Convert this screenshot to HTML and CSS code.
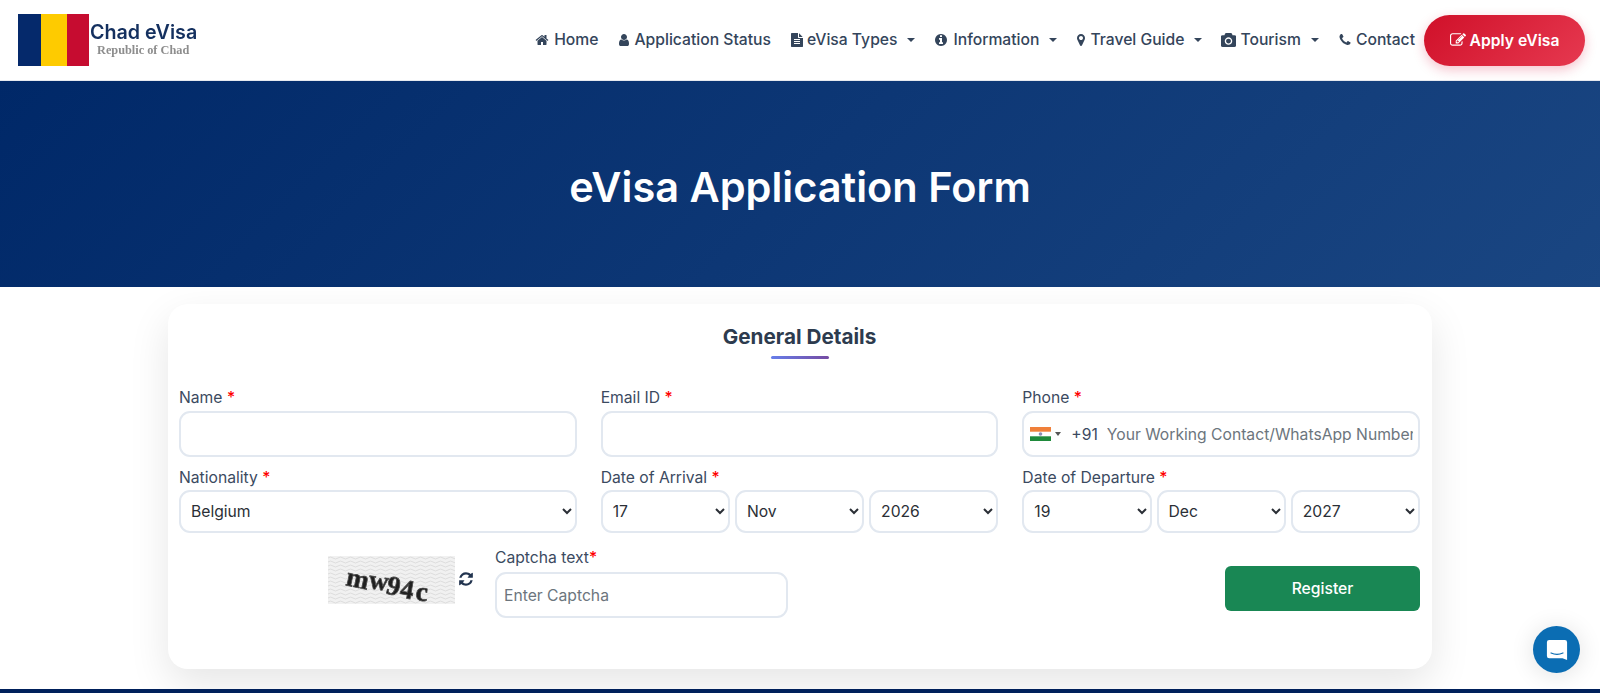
FILE: index.html
```html
<!DOCTYPE html>
<html lang="en">
<head>
<meta charset="utf-8">
<title>eVisa Application Form</title>
<link rel="stylesheet" href="styles.css">
</head>
<body>
<svg class="sprite" aria-hidden="true">
  <symbol id="i-home" viewBox="0 0 1792 1792"><path d="M1472 992v480q0 26-19 45t-45 19h-384v-384h-256v384h-384q-26 0-45-19t-19-45v-480q0-1 .5-3t.5-3l575-474 575 474q1 2 1 6zm223-69l-62 74q-8 9-21 11h-3q-13 0-21-7l-692-577-692 577q-12 8-24 7-13-2-21-11l-62-74q-8-10-7-23.500t11-21.500l719-599q32-26 76-26t76 26l244 204v-195q0-14 9-23t23-9h192q14 0 23 9t9 23v408l219 182q10 8 11 21.500t-7 23.500z"/></symbol>
  <symbol id="i-user" viewBox="0 0 1792 1792"><path d="M1536 1399q0 109-62.500 187t-150.500 78h-854q-88 0-150.500-78t-62.500-187q0-85 8.500-160.500t31.500-152 58.500-131 94-89 134.500-34.500q131 128 313 128t313-128q76 0 134.500 34.500t94 89 58.500 131 31.500 152 8.500 160.500zm-256-887q0 159-112.500 271.500t-271.500 112.500-271.500-112.500-112.500-271.500 112.500-271.500 271.500-112.500 271.500 112.500 112.500 271.500z"/></symbol>
  <symbol id="i-file" viewBox="0 0 1792 1792"><path d="M1596 476q14 14 28 36h-472v-472q22 14 36 28zm-476 164h544v1056q0 40-28 68t-68 28h-1344q-40 0-68-28t-28-68v-1600q0-40 28-68t68-28h800v544q0 40 28 68t68 28zm160 736v-64q0-14-9-23t-23-9h-704q-14 0-23 9t-9 23v64q0 14 9 23t23 9h704q14 0 23-9t9-23zm0-256v-64q0-14-9-23t-23-9h-704q-14 0-23 9t-9 23v64q0 14 9 23t23 9h704q14 0 23-9t9-23zm0-256v-64q0-14-9-23t-23-9h-704q-14 0-23 9t-9 23v64q0 14 9 23t23 9h704q14 0 23-9t9-23z"/></symbol>
  <symbol id="i-info" viewBox="0 0 1792 1792"><path d="M1152 1376v-160q0-14-9-23t-23-9h-96v-512q0-14-9-23t-23-9h-320q-14 0-23 9t-9 23v160q0 14 9 23t23 9h96v320h-96q-14 0-23 9t-9 23v160q0 14 9 23t23 9h448q14 0 23-9t9-23zm-128-896v-160q0-14-9-23t-23-9h-192q-14 0-23 9t-9 23v160q0 14 9 23t23 9h192q14 0 23-9t9-23zm640 416q0 209-103 385.500t-279.500 279.500-385.500 103-385.500-103-279.500-279.500-103-385.500 103-385.500 279.500-279.500 385.500-103 385.500 103 279.500 279.500 103 385.500z"/></symbol>
  <symbol id="i-pin" viewBox="0 0 1792 1792"><path d="M1152 640q0-106-75-181t-181-75-181 75-75 181 75 181 181 75 181-75 75-181zm256 0q0 109-33 179l-364 774q-16 33-47.500 52t-67.500 19-67.500-19-46.500-52l-365-774q-33-70-33-179 0-212 150-362t362-150 362 150 150 362z"/></symbol>
  <symbol id="i-camera" viewBox="0 0 1792 1792"><path d="M896 672q119 0 203.500 84.500t84.500 203.500-84.500 203.500-203.500 84.500-203.500-84.500-84.500-203.500 84.500-203.500 203.500-84.500zm704-416q106 0 181 75t75 181v896q0 106-75 181t-181 75h-1408q-106 0-181-75t-75-181v-896q0-106 75-181t181-75h224l51-136q19-49 69.500-84.500t103.500-35.500h512q53 0 103.500 35.500t69.500 84.500l51 136h224zm-704 1152q185 0 316.500-131.500t131.500-316.500-131.500-316.500-316.500-131.500-316.500 131.500-131.500 316.500 131.500 316.500 316.500 131.500z"/></symbol>
  <symbol id="i-phone" viewBox="0 0 1792 1792"><path d="M1600 1240q0 27-10 70.500t-21 68.500q-21 50-122 106-94 51-186 51-27 0-53-3.500t-57.500-12.500-47-14.500-55.500-20.500-49-18q-98-35-175-83-127-79-264-216t-216-264q-48-77-83-175-3-9-18-49t-20.500-55.500-14.500-47-12.500-57.500-3.500-53q0-92 51-186 56-101 106-122 25-11 68.500-21t70.500-10q14 0 21 3 18 6 53 76 11 19 30 54t35 63.500 31 53.500q3 4 17.500 25t21.500 35.500 7 28.500q0 20-28.500 50t-62 55-62 53-28.500 46q0 9 5 22.500t8.500 20.500 14 24 11.500 19q76 137 174 235t235 174q2 1 19 11.500t24 14 20.500 8.500 22.500 5q18 0 46-28.500t53-62 55-62 50-28.500q14 0 28.500 7t35.500 21.500 25 17.500q25 15 53.500 31t63.500 35 54 30q70 35 76 53 3 7 3 21z"/></symbol>
  <symbol id="i-edit" viewBox="0 0 1792 1792"><path d="M888 1184l116-116-152-152-116 116v56h96v96h56zm440-720q-16-16-33 1l-350 350q-17 17-1 33t33-1l350-350q17-17 1-33zm80 594v190q0 119-84.500 203.500t-203.500 84.500h-832q-119 0-203.500-84.500t-84.500-203.500v-832q0-119 84.500-203.500t203.500-84.500h832q63 0 117 25 15 7 18 23 3 17-9 29l-49 49q-14 14-32 8-23-6-45-6h-832q-66 0-113 47t-47 113v832q0 66 47 113t113 47h832q66 0 113-47t47-113v-126q0-13 9-22l64-64q15-15 35-7t20 29zm-96-738l288 288-672 672h-288v-288zm444 132l-92 92-288-288 92-92q28-28 68-28t68 28l152 152q28 28 28 68t-28 68z"/></symbol>
  <symbol id="i-refresh" viewBox="0 0 1792 1792"><path d="M1639 1056q0 5-1 7-64 268-268 434.500t-478 166.500q-146 0-282.500-55t-243.500-157l-129 129q-19 19-45 19t-45-19-19-45v-448q0-26 19-45t45-19h448q26 0 45 19t19 45-19 45l-137 137q71 66 161 102t187 36q134 0 250-65t186-179q11-17 53-117 8-23 30-23h192q13 0 22.500 9.500t9.500 22.500zm25-800v448q0 26-19 45t-45 19h-448q-26 0-45-19t-19-45 19-45l138-138q-148-137-349-137-134 0-250 65t-186 179q-11 17-53 117-8 23-30 23h-199q-13 0-22.500-9.500t-9.500-22.500v-7q65-268 270-434.500t480-166.500q146 0 284 55.500t245 156.500l130-129q19-19 45-19t45 19 19 45z"/></symbol>
</svg>

<header class="site-header">
  <a class="brand" href="#">
    <span class="flag"><i class="flag-blue"></i><i class="flag-yellow"></i><i class="flag-red"></i></span>
    <span class="brand-text">
      <span class="brand-name">Chad eVisa</span>
      <span class="brand-sub">Republic of Chad</span>
    </span>
  </a>
  <nav class="nav">
    <a class="nav-link" href="#"><svg class="ico"><use href="#i-home"/></svg>Home</a>
    <a class="nav-link" href="#"><svg class="ico ico-tight"><use href="#i-user"/></svg>Application Status</a>
    <a class="nav-link" href="#"><svg class="ico ico-tight"><use href="#i-file"/></svg>eVisa Types<span class="caret"></span></a>
    <a class="nav-link" href="#"><svg class="ico"><use href="#i-info"/></svg>Information<span class="caret"></span></a>
    <a class="nav-link" href="#"><svg class="ico ico-pin"><use href="#i-pin"/></svg>Travel Guide<span class="caret"></span></a>
    <a class="nav-link" href="#"><svg class="ico ico-wide"><use href="#i-camera"/></svg>Tourism<span class="caret"></span></a>
    <a class="nav-link" href="#"><svg class="ico ico-phone"><use href="#i-phone"/></svg>Contact</a>
  </nav>
  <a class="apply" href="#"><svg class="ico ico-apply"><use href="#i-edit"/></svg>Apply eVisa</a>
</header>

<section class="hero">
  <h1>eVisa Application Form</h1>
</section>

<main class="content">
  <form class="card">
    <h2 class="card-title">General Details</h2>
    <div class="title-bar"></div>

    <div class="grid grid-one">
      <div class="field">
        <label>Name <b>*</b></label>
        <input class="control control-tall" type="text">
      </div>
      <div class="field">
        <label>Email ID <b>*</b></label>
        <input class="control control-tall" type="text">
      </div>
      <div class="field">
        <label>Phone <b>*</b></label>
        <div class="phone">
          <svg class="in-flag" viewBox="0 0 21 14"><rect width="21" height="14" fill="#fff"/><rect width="21" height="4.700" fill="#f0803a"/><rect y="9.300" width="21" height="4.700" fill="#1f8a3b"/><circle cx="10.500" cy="7" r="1.800" fill="#8a8fb5"/></svg>
          <span class="in-caret"></span>
          <span class="dial">+91</span>
          <input class="phone-input" type="text" placeholder="Your Working Contact/WhatsApp Number">
        </div>
      </div>
    </div>

    <div class="grid grid-two">
      <div class="field">
        <label>Nationality <b>*</b></label>
        <select class="control control-sel"><option>Belgium</option></select>
      </div>
      <div class="field">
        <label>Date of Arrival <b>*</b></label>
        <div class="dates">
          <select class="control control-sel"><option>17</option></select>
          <select class="control control-sel"><option>Nov</option></select>
          <select class="control control-sel"><option>2026</option></select>
        </div>
      </div>
      <div class="field">
        <label>Date of Departure <b>*</b></label>
        <div class="dates">
          <select class="control control-sel"><option>19</option></select>
          <select class="control control-sel"><option>Dec</option></select>
          <select class="control control-sel"><option>2027</option></select>
        </div>
      </div>
    </div>

    <div class="captcha-row">
      <svg class="captcha" viewBox="0 0 127 48">
        <defs>
          <pattern id="wave" width="10" height="4" patternUnits="userSpaceOnUse">
            <path d="M0 2 Q2.500 0 5 2 T10 2" fill="none" stroke="#d2d2d2" stroke-width=".7"/>
          </pattern>
        </defs>
        <rect width="127" height="48" fill="#f1f1f1"/>
        <rect width="127" height="48" fill="url(#wave)"/>
        <text class="captcha-text" x="17 40 57 71 87" y="29 32 37 41 44" rotate="12 8 14 10 6">mw94c</text>
      </svg>
      <svg class="ico-refresh"><use href="#i-refresh"/></svg>
      <div class="field captcha-field">
        <label>Captcha text<b>*</b></label>
        <input class="control control-tall control-cap" type="text" placeholder="Enter Captcha">
      </div>
      <button class="register" type="button">Register</button>
    </div>
  </form>
</main>

<footer class="footer"></footer>

<button class="chat" type="button" aria-label="Chat">
  <svg viewBox="0 0 24 24" class="chat-ico"><path d="M3.500 1h17A2.500 2.500 0 0 1 23 3.500V23l-5-2H3.500A2.500 2.500 0 0 1 1 18.500v-15A2.500 2.500 0 0 1 3.500 1z" fill="#fff"/><path d="M5.500 15.200q6.500 3 13 0" fill="none" stroke="#0b6db3" stroke-width="1.300" stroke-linecap="round"/></svg>
</button>
</body>
</html>
```

FILE: styles.css
```css
* { box-sizing: border-box; }

html, body { margin: 0; height: 693px; overflow: hidden; }

body {
  background: #fff;
  font-family: Inter, "Liberation Sans", sans-serif;
  color: #2d3b4e;
  font-size: 15.680px;
}

.sprite { display: none; }

a { color: inherit; text-decoration: none; }

/* header */
.site-header {
  height: 81px;
  display: flex;
  align-items: center;
  padding: 0 15px 0 18px;
  background: #fff;
  border-bottom: 1px solid #e6e9ef;
}

.brand { display: flex; align-items: flex-start; margin-right: auto; filter: blur(.35px); }

.flag { display: flex; width: 71px; height: 52px; }
.flag i { display: block; height: 100%; }
.flag-blue { width: 23px; background: #05296b; }
.flag-yellow { width: 26px; background: #fecb00; }
.flag-red { width: 22px; background: #c60c30; }

.brand-text { display: flex; flex-direction: column; margin-left: 1px; padding-top: 6px; }
.brand-name {
  font-family: Inter, sans-serif;
  font-weight: 600;
  font-size: 19.700px;
  line-height: 24px;
  color: #14305f;
  white-space: nowrap;
}
.brand-sub {
  font-family: "Liberation Serif", serif;
  font-weight: 700;
  font-size: 12.300px;
  line-height: 13px;
  color: #8d8d8d;
  margin-left: 7px;
  white-space: nowrap;
}

.nav { display: flex; align-items: center; gap: 19px; margin-right: 9px; }

.nav-link {
  display: flex;
  align-items: center;
  font-weight: 500;
  font-size: 15.680px;
  line-height: 22px;
  color: #34455b;
  white-space: nowrap;
}

.ico { width: 14px; height: 14px; fill: currentColor; margin-right: 5px; flex: none; }
.ico-tight { margin-right: 3px; }
.ico-pin { margin: 0 2px 0 -2px; }
.ico-phone { margin-right: 4px; }
.ico-wide { width: 15px; height: 15px; margin-right: 4px; }

.caret {
  width: 0;
  height: 0;
  margin-left: 10px;
  border-top: 4px solid currentColor;
  border-left: 4px solid transparent;
  border-right: 4px solid transparent;
}

.apply {
  width: 161px;
  height: 51px;
  display: flex;
  align-items: center;
  justify-content: center;
  border-radius: 26px;
  background: linear-gradient(135deg, #d01029, #e63950);
  color: #fff;
  font-weight: 600;
  font-size: 15.680px;
  box-shadow: 0 4px 12px rgba(220, 20, 60, .25);
}
.ico-apply { width: 16px; height: 16px; margin-right: 4px; }

/* hero */
.hero {
  height: 206px;
  padding-top: 8px;
  display: flex;
  align-items: center;
  justify-content: center;
  background: linear-gradient(135deg, #002868, #1a4682);
}
.hero h1 {
  margin: 0;
  font-family: Inter, sans-serif;
  font-weight: 600;
  font-size: 41.500px;
  line-height: 1.2;
  color: #fff;
}

/* card */
.content { padding: 17px 168px 20px; }

.card {
  height: 365px;
  padding: 0 12px 0 11px;
  background: #fff;
  border-radius: 20px;
  box-shadow: 0 15px 40px rgba(0, 0, 0, .1);
}

.card-title {
  margin: 0;
  padding-top: 21px;
  text-align: center;
  font-weight: 700;
  font-size: 20.700px;
  line-height: 24px;
  color: #2d3b4e;
}

.title-bar {
  width: 58px;
  height: 3px;
  margin: 7px auto 0;
  border-radius: 2px;
  background: linear-gradient(90deg, #667eea, #764ba2);
}

.grid { display: grid; grid-template-columns: repeat(3, 1fr); column-gap: 24px; }
.grid-one { margin-top: 28px; }
.grid-two { margin-top: 10px; }

.field { display: flex; flex-direction: column; min-width: 0; }

.field label {
  font-size: 15.680px;
  line-height: 22px;
  font-weight: 400;
  color: #3b4a5f;
  margin-bottom: 2px;
}
.grid-two .field label { margin-bottom: 1px; }
.field label b { color: #f00; font-weight: 500; }

.control {
  width: 100%;
  background: #fff;
  border: 2px solid #e2e8f0;
  border-radius: 11px;
  font-family: Inter, sans-serif;
  font-size: 15.680px;
  color: #2b2f36;
  outline: none;
}
.control-tall { height: 46px; padding: 0 6px; }
.control-sel { height: 43px; padding: 0 6px; }
.control::placeholder, .phone-input::placeholder { color: #6c757d; opacity: 1; }

.dates { display: grid; grid-template-columns: repeat(3, 1fr); column-gap: 5px; }

.phone {
  height: 46px;
  display: flex;
  align-items: center;
  border: 2px solid #e2e8f0;
  border-radius: 11px;
  padding: 0 5px 0 6px;
  background: #fff;
}
.in-flag { width: 21px; height: 14px; flex: none; }
.in-caret {
  flex: none;
  width: 0;
  height: 0;
  margin-left: 4px;
  border-top: 4px solid #555;
  border-left: 3px solid transparent;
  border-right: 3px solid transparent;
}
.dial { flex: none; margin-left: 10px; font-size: 15.680px; color: #3b4a5f; }
.phone-input {
  flex: 1;
  min-width: 0;
  margin-left: 9px;
  padding: 0;
  border: 0;
  outline: none;
  font-family: Inter, sans-serif;
  font-size: 15.680px;
  background: transparent;
}

.captcha-row { display: flex; align-items: flex-start; margin-top: 14px; padding-left: 149px; }

.captcha { width: 127px; height: 48px; margin-top: 9px; flex: none; overflow: visible; }
.captcha-text {
  font-family: "Liberation Serif", serif;
  font-weight: 700;
  font-size: 27px;
  fill: #1f1f1f;
  stroke: #4a4a4a;
  stroke-width: .8px;
  filter: blur(.4px);
}

.ico-refresh { width: 16px; height: 16px; fill: #22344f; margin: 24px 0 0 3px; flex: none; }

.captcha-field { width: 293px; margin-left: 21px; }
.captcha-field label { margin-bottom: 3px; }
.control-cap { padding: 0 7px; }

.register {
  width: 195px;
  height: 45px;
  margin: 19px 0 0 auto;
  border: 0;
  border-radius: 6px;
  background: #198754;
  color: #fff;
  font-family: Inter, sans-serif;
  font-weight: 500;
  font-size: 15.680px;
}

/* footer */
.footer { height: 10px; background: #00205b; }

/* chat bubble */
.chat {
  position: fixed;
  right: 20px;
  bottom: 20px;
  width: 47px;
  height: 47px;
  padding: 0;
  display: flex;
  align-items: center;
  justify-content: center;
  border: 0;
  border-radius: 50%;
  background: #0b6db3;
  box-shadow: 0 2px 24px rgba(0, 0, 0, .12);
}
.chat-ico { width: 22px; height: 22px; }
```
